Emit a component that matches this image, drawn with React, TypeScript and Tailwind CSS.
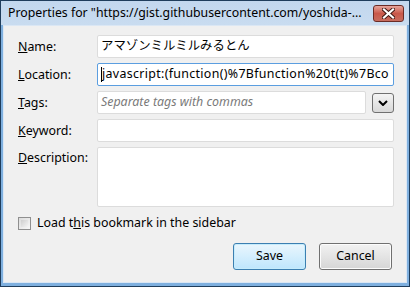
import type { ReactNode } from 'react'

const FONT = "font-['Noto_Sans','Noto_Sans_CJK_JP',sans-serif]"

function Label({ children, top = false }: { children: ReactNode; top?: boolean }) {
  return (
    <div className={`w-[93px] shrink-0 pl-[14px] text-[12.4px] text-black ${top ? 'pt-[2px]' : 'leading-[23px]'}`}>{children}</div>
  )
}

function Field({ value, placeholder, focused = false }: { value?: string; placeholder?: string; focused?: boolean }) {
  return (
    <div
      className={`flex h-[23px] min-w-0 flex-1 items-center overflow-hidden whitespace-nowrap rounded-[2px] border bg-white pl-[3px] text-[12.4px] ${
        focused ? 'border-[#5b9ee0]' : 'border-[#dcdcdc]'
      }`}
    >
      {focused && <span className="h-[15px] w-px shrink-0 bg-black" />}
      {value ? (
        <span className={focused ? 'tracking-[0.33px] text-black' : 'text-black'}>{value}</span>
      ) : (
        <span className="italic text-[#7a7a7a]">{placeholder}</span>
      )}
    </div>
  )
}

export default function App() {
  return (
    <div className={`${FONT} flex h-[287px] w-[410px] flex-col border border-[#1f3d5c] bg-[#7fb0df]`}>
      <div className="flex h-[24px] shrink-0 items-center justify-between bg-gradient-to-b from-[#c2d7ee] to-[#c9dcf0] pl-[7px] pr-[5px]">
        <span className="whitespace-nowrap text-[12.3px] text-black">Properties for "https://gist.githubusercontent.com/yoshida-...</span>
        <div className="flex h-[17px] w-[31px] shrink-0 items-center justify-center rounded-[3px] border border-[#6b2b25] bg-gradient-to-b from-[#e6a59c] via-[#c9584a] to-[#c76c5e]">
          <svg width="13" height="11" viewBox="0 0 13 11">
            <path d="M2 1.5 L11 9.5 M11 1.5 L2 9.5" stroke="#3b1510" strokeWidth="4" strokeLinecap="square" />
            <path d="M2 1.5 L11 9.5 M11 1.5 L2 9.5" stroke="#ffffff" strokeWidth="2.2" strokeLinecap="square" />
          </svg>
        </div>
      </div>
      <div className="mx-[2px] mb-[3px] flex flex-1 flex-col border border-[#dbe7f4] bg-[#f0f0f0] pt-[9px] pr-[12px]">
        <div className="flex flex-col gap-[5px]">
          <div className="flex">
            <Label><span className="underline">N</span>ame:</Label>
            <Field value="アマゾンミルミルみるとん" />
          </div>
          <div className="flex">
            <Label><span className="underline">L</span>ocation:</Label>
            <Field value="javascript:(function()%7Bfunction%20t(t)%7Bco" focused />
          </div>
          <div className="flex">
            <Label><span className="underline">T</span>ags:</Label>
            <Field placeholder="Separate tags with commas" />
            <div className="ml-[6px] mt-[2px] flex h-[20px] w-[22px] items-center justify-center rounded-[3px] border border-[#707070] bg-gradient-to-b from-[#f4f4f4] to-[#d8d8d8]">
              <svg width="10" height="6" viewBox="0 0 10 6">
                <path d="M1 1 L5 5 L9 1" fill="none" stroke="#000" strokeWidth="2" />
              </svg>
            </div>
          </div>
          <div className="flex">
            <Label><span className="underline">K</span>eyword:</Label>
            <Field />
          </div>
          <div className="flex">
            <Label top><span className="underline">D</span>escription:</Label>
            <div className="h-[60px] flex-1 rounded-[2px] border border-[#dcdcdc] bg-white" />
          </div>
        </div>
        <div className="ml-[14px] mt-[7px] flex items-center gap-[6px] text-[12.4px]">
          <div className="h-[13px] w-[13px] border border-[#8f8f8f] bg-gradient-to-br from-[#dcdcdc] to-[#f8f8f8] p-[2px]">
            <div className="h-full w-full bg-gradient-to-br from-[#cfcfcf] to-[#f4f4f4]" />
          </div>
          <span>Load t<span className="underline">h</span>is bookmark in the sidebar</span>
        </div>
        <div className="mt-[10px] flex justify-end gap-[13px] pr-[2px]">
          <div className="flex h-[27px] w-[73px] items-center justify-center rounded-[3px] border border-[#3c7fb1] bg-gradient-to-b from-[#eaf6fd] to-[#bee6fd] text-[12.4px] shadow-[inset_0_0_0_1px_#c6ecfc]">
            Save
          </div>
          <div className="flex h-[27px] w-[73px] items-center justify-center rounded-[3px] border border-[#707070] bg-gradient-to-b from-[#f2f2f2] to-[#d6d6d6] text-[12.4px] shadow-[inset_0_0_0_1px_#fcfcfc]">
            Cancel
          </div>
        </div>
      </div>
    </div>
  )
}
